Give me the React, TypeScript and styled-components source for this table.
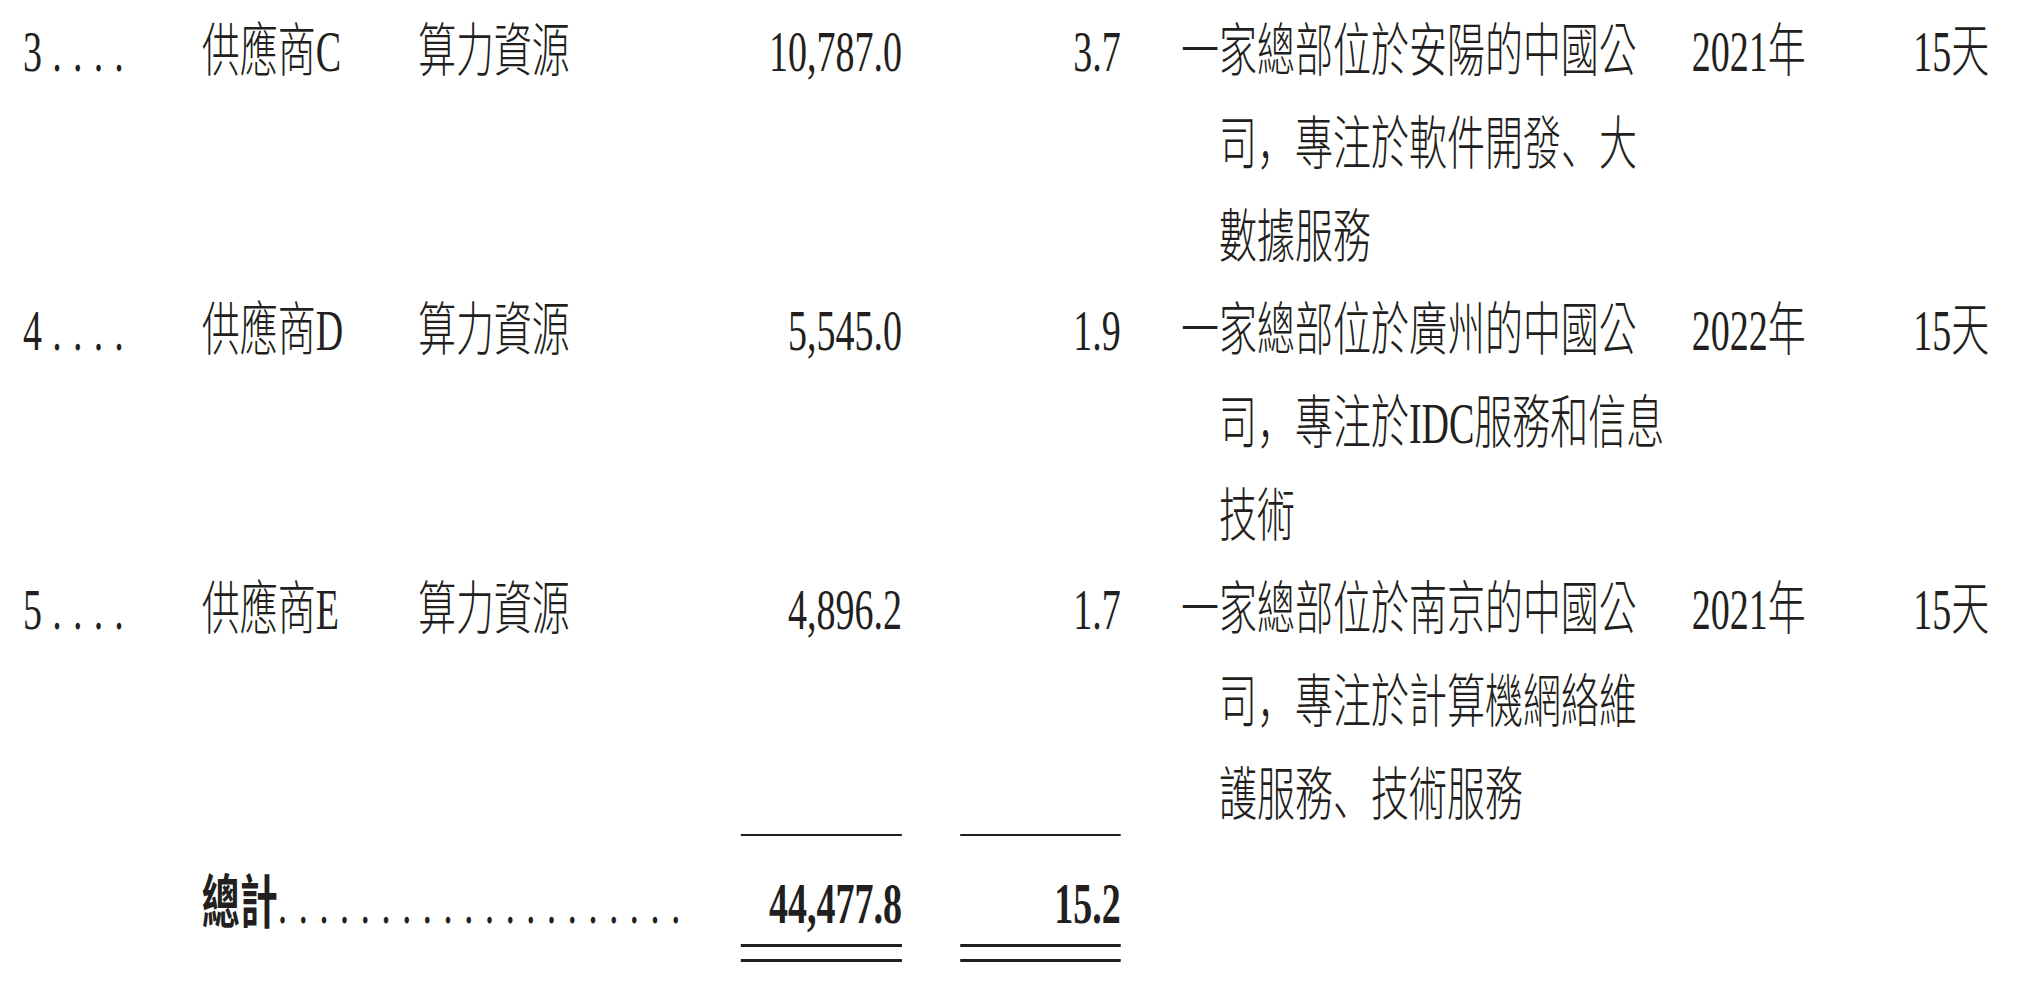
import styled, { createGlobalStyle } from "styled-components";

// the printed table is set in a condensed face: lay out in unscaled units, squeeze once
const SQUEEZE = 0.655;

type Supplier = {
  no: number;
  name: string;
  item: string;
  amount: string;
  pct: string;
  desc: string[];
  since: string;
  credit: string;
};

const suppliers: Supplier[] = [
  {
    no: 3,
    name: "供應商C",
    item: "算力資源",
    amount: "10,787.0",
    pct: "3.7",
    desc: ["一家總部位於安陽的中國公", "司，專注於軟件開發、大", "數據服務"],
    since: "2021年",
    credit: "15天",
  },
  {
    no: 4,
    name: "供應商D",
    item: "算力資源",
    amount: "5,545.0",
    pct: "1.9",
    desc: ["一家總部位於廣州的中國公", "司，專注於IDC服務和信息", "技術"],
    since: "2022年",
    credit: "15天",
  },
  {
    no: 5,
    name: "供應商E",
    item: "算力資源",
    amount: "4,896.2",
    pct: "1.7",
    desc: ["一家總部位於南京的中國公", "司，專注於計算機網絡維", "護服務、技術服務"],
    since: "2021年",
    credit: "15天",
  },
];

const GlobalStyle = createGlobalStyle`
  html, body {
    margin: 0;
    padding: 0;
    background: #ffffff;
    overflow: hidden;
  }
`;

const Page = styled.div`
  width: 100vw;
  height: 100vh;
  overflow: hidden;
  background: #ffffff;
`;

const Sheet = styled.div`
  width: ${2028 / SQUEEZE}px;
  box-sizing: border-box;
  padding: 5px 0 0 35px;
  transform: scaleX(${SQUEEZE});
  transform-origin: 0 0;
  font-family: "Liberation Serif", "Noto Sans CJK TC", serif;
  font-size: 58px;
  font-weight: 300;
  line-height: 93px;
  color: #231f20;
`;

const Row = styled.div`
  display: grid;
  grid-template-columns: 273px 330px 493px 246px 334px 872px 280px 174px;
  align-items: start;
`;

const Cell = styled.div<{ $right?: boolean }>`
  white-space: nowrap;
  text-align: ${(p) => (p.$right ? "right" : "left")};
`;

const Leader = styled.span`
  letter-spacing: 1.3px;
  font-weight: 400;
`;

const Punct = styled.span`
  font-family: "Noto Sans CJK SC", sans-serif;
  line-height: 1;
`;

const Desc = styled.div`
  padding-left: 150px;
  text-indent: -58px;
  white-space: nowrap;
`;

const TotalRow = styled(Row)`
  margin-top: -8px;
`;

const TotalLabel = styled.div`
  grid-column: 2 / span 2;
  padding-top: 38px;
  line-height: 64px;
  font-weight: 700;
  white-space: nowrap;
`;

const TotalFigure = styled.div<{ $inset?: number }>`
  margin-left: ${(p) => p.$inset ?? 0}px;
  display: flex;
  flex-direction: column;
  border-top: 2px solid #231f20;
`;

const TotalValue = styled.div`
  padding-top: 36px;
  line-height: 64px;
  font-weight: 700;
  text-align: right;
`;

const DoubleRule = styled.div`
  margin-top: 8px;
  height: 12px;
  border-top: 3px solid #231f20;
  border-bottom: 3px solid #231f20;
`;

// swap full-width punctuation into a face that sets it low and to the left
function withPunct(line: string) {
  return line.split(/([，、])/).map((part, i) =>
    part === "，" || part === "、" ? <Punct key={i}>{part}</Punct> : part
  );
}

function SupplierRow({ s }: { s: Supplier }) {
  return (
    <Row>
      <Cell>
        {s.no}
        <Leader> . . . .</Leader>
      </Cell>
      <Cell>{s.name}</Cell>
      <Cell>{s.item}</Cell>
      <Cell $right>{s.amount}</Cell>
      <Cell $right>{s.pct}</Cell>
      <Desc>
        {s.desc.map((line, i) => (
          <span key={i}>
            {i > 0 && <br />}
            {withPunct(line)}
          </span>
        ))}
      </Desc>
      <Cell>{s.since}</Cell>
      <Cell $right>{s.credit}</Cell>
    </Row>
  );
}

export default function App() {
  return (
    <Page>
      <GlobalStyle />
      <Sheet>
        {suppliers.map((s) => (
          <SupplierRow key={s.no} s={s} />
        ))}
        <TotalRow>
          <TotalLabel>
            總計
            <Leader>{". ".repeat(19) + "."}</Leader>
          </TotalLabel>
          <TotalFigure>
            <TotalValue>44,477.8</TotalValue>
            <DoubleRule />
          </TotalFigure>
          <TotalFigure $inset={89}>
            <TotalValue>15.2</TotalValue>
            <DoubleRule />
          </TotalFigure>
        </TotalRow>
      </Sheet>
    </Page>
  );
}
